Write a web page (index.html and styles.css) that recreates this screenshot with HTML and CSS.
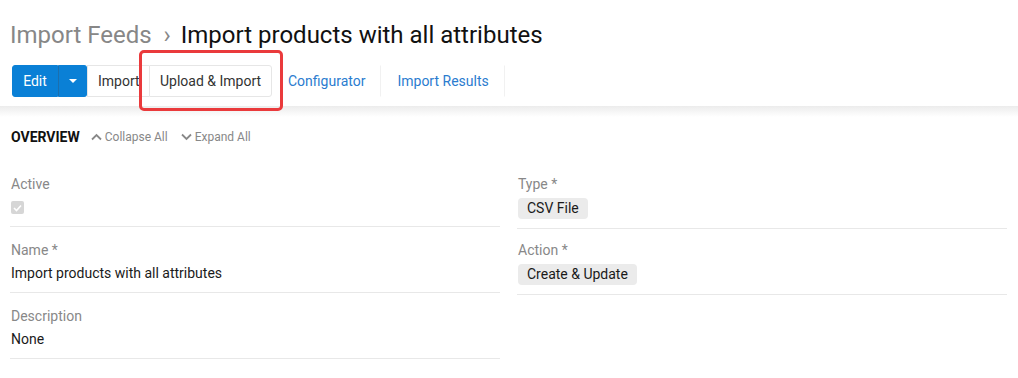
FILE: index.html
```html
<!DOCTYPE html>
<html lang="en">
<head>
    <meta charset="UTF-8">
    <title>Import products with all attributes</title>
    <link rel="stylesheet" href="styles.css">
</head>
<body>
    <div class="page-header">
        <h1 class="title">
            <span class="crumb">Import Feeds</span>
            <span class="sep">&rsaquo;</span>
            <span class="name">Import products with all attributes</span>
        </h1>
        <div class="toolbar">
            <div class="btn-group">
                <button class="btn btn-primary">Edit</button>
                <button class="btn btn-primary btn-caret"><span class="caret"></span></button>
                <button class="btn btn-default btn-import">Import</button>
                <button class="btn btn-default btn-upload">Upload &amp; Import</button>
            </div>
            <a class="btn btn-link" href="#">Configurator</a>
            <a class="btn btn-link" href="#">Import Results</a>
            <span class="highlight"></span>
        </div>
    </div>

    <div class="panel">
        <div class="panel-heading">
            <span class="panel-title">OVERVIEW</span>
            <a class="toggle" href="#">
                <svg width="11" height="8" viewBox="0 0 11 8"><path d="M1 6.5 L5.5 2 L10 6.5" fill="none" stroke="#888" stroke-width="1.8"/></svg>
                Collapse All
            </a>
            <a class="toggle" href="#">
                <svg width="11" height="8" viewBox="0 0 11 8"><path d="M1 1.5 L5.5 6 L10 1.5" fill="none" stroke="#888" stroke-width="1.8"/></svg>
                Expand All
            </a>
        </div>

        <div class="fields">
            <div class="column">
                <div class="field">
                    <div class="label">Active</div>
                    <div class="value"><span class="checkbox"><svg width="9" height="8" viewBox="0 0 9 8"><path d="M1 4 L3.5 6.5 L8 1.5" fill="none" stroke="#fff" stroke-width="1.6"/></svg></span></div>
                </div>
                <div class="field">
                    <div class="label">Name *</div>
                    <div class="value">Import products with all attributes</div>
                </div>
                <div class="field">
                    <div class="label">Description</div>
                    <div class="value">None</div>
                </div>
            </div>
            <div class="column">
                <div class="field">
                    <div class="label">Type *</div>
                    <div class="value"><span class="badge">CSV File</span></div>
                </div>
                <div class="field">
                    <div class="label">Action *</div>
                    <div class="value"><span class="badge">Create &amp; Update</span></div>
                </div>
            </div>
        </div>
    </div>
</body>
</html>
```

FILE: styles.css
```css
body {
    margin: 0;
    font-family: Roboto, "Liberation Sans", Arial, sans-serif;
    font-size: 14px;
    color: #222;
    background: #fff;
}
.page-header {
    padding: 20px 10px 9px 10px;
    height: 77px;
}
.title {
    margin: 0;
    font-size: 24px;
    font-weight: 400;
    line-height: 30px;
    white-space: nowrap;
}
.title .crumb {
    color: #878787;
}
.title .sep {
    color: #878787;
    margin: 0 4px 0 6px;
}
.title .name {
    color: #111;
}
.toolbar {
    position: relative;
    display: flex;
    align-items: center;
    margin-top: 15px;
    margin-left: 2px;
    height: 32px;
}
.btn-group {
    display: flex;
}
.btn {
    height: 32px;
    box-sizing: border-box;
    font-family: inherit;
    font-size: 14px;
    line-height: 30px;
    padding: 0 11px;
    border: 1px solid transparent;
    background: #fff;
    color: #333;
    cursor: pointer;
    text-decoration: none;
    white-space: nowrap;
    margin: 0;
}
.btn-primary {
    background: #0a80d6;
    border-color: #0a80d6;
    color: #fff;
    width: 46px;
    padding: 0;
    border-radius: 3px 0 0 3px;
}
.btn-caret {
    width: 29px;
    border-left-color: #1b6fae;
    border-radius: 0 3px 3px 0;
    display: flex;
    align-items: center;
    justify-content: center;
}
.caret {
    width: 0;
    height: 0;
    border-left: 4px solid transparent;
    border-right: 4px solid transparent;
    border-top: 4px solid #fff;
}
.btn-default {
    border-color: #e6e6e6;
    border-radius: 0;
}
.btn-import {
    width: 62px;
    padding: 0 0 0 10px;
    text-align: left;
    border-right: none;
}
.btn-upload {
    width: 123px;
    padding: 0;
    text-align: center;
    border-radius: 0 3px 3px 0;
}
.btn-link {
    display: block;
    color: #2b7ccf;
    padding: 0 15px;
    border-right-color: #f1f1f1;
}
.btn-link:first-of-type {
    padding-left: 15px;
}
.highlight {
    position: absolute;
    left: 127px;
    top: -15px;
    width: 138px;
    height: 55px;
    border: 3px solid #ea3a3c;
    border-radius: 5px;
}
.panel {
    background: linear-gradient(#ececec, #fff 11px);
    padding: 21px 11px 20px 10px;
}
.panel-heading {
    display: flex;
    align-items: center;
    line-height: 20px;
}
.panel-title {
    font-size: 14px;
    font-weight: 700;
    color: #111;
    margin-left: 1px;
    margin-right: 11px;
}
.toggle {
    font-size: 12px;
    color: #888;
    text-decoration: none;
    margin-right: 13px;
    display: flex;
    align-items: center;
}
.toggle svg {
    margin-right: 3px;
}
.fields {
    display: grid;
    grid-template-columns: 490px 490px;
    column-gap: 17px;
    margin-top: 14px;
}
.field {
    padding: 13px 0 9px 1px;
    border-bottom: 1px solid #e8e8e8;
}
.label {
    color: #888;
    line-height: 20px;
    margin-bottom: 3px;
}
.value {
    line-height: 20px;
    height: 20px;
    color: #1a1a1a;
}
.column + .column .field {
    padding-top: 11px;
    padding-bottom: 8px;
}
.column + .column .field:first-child {
    padding-top: 13px;
}
.column + .column .value {
    height: 22px;
    margin-top: 4px;
}
.checkbox {
    display: inline-flex;
    align-items: center;
    justify-content: center;
    width: 13px;
    height: 13px;
    border-radius: 2px;
    background: #d6d6d6;
    margin-top: 4px;
    vertical-align: top;
}
.badge {
    display: inline-block;
    background: #ebebeb;
    border-radius: 4px;
    padding: 0 9px;
    line-height: 21px;
    color: #1a1a1a;
}
```
